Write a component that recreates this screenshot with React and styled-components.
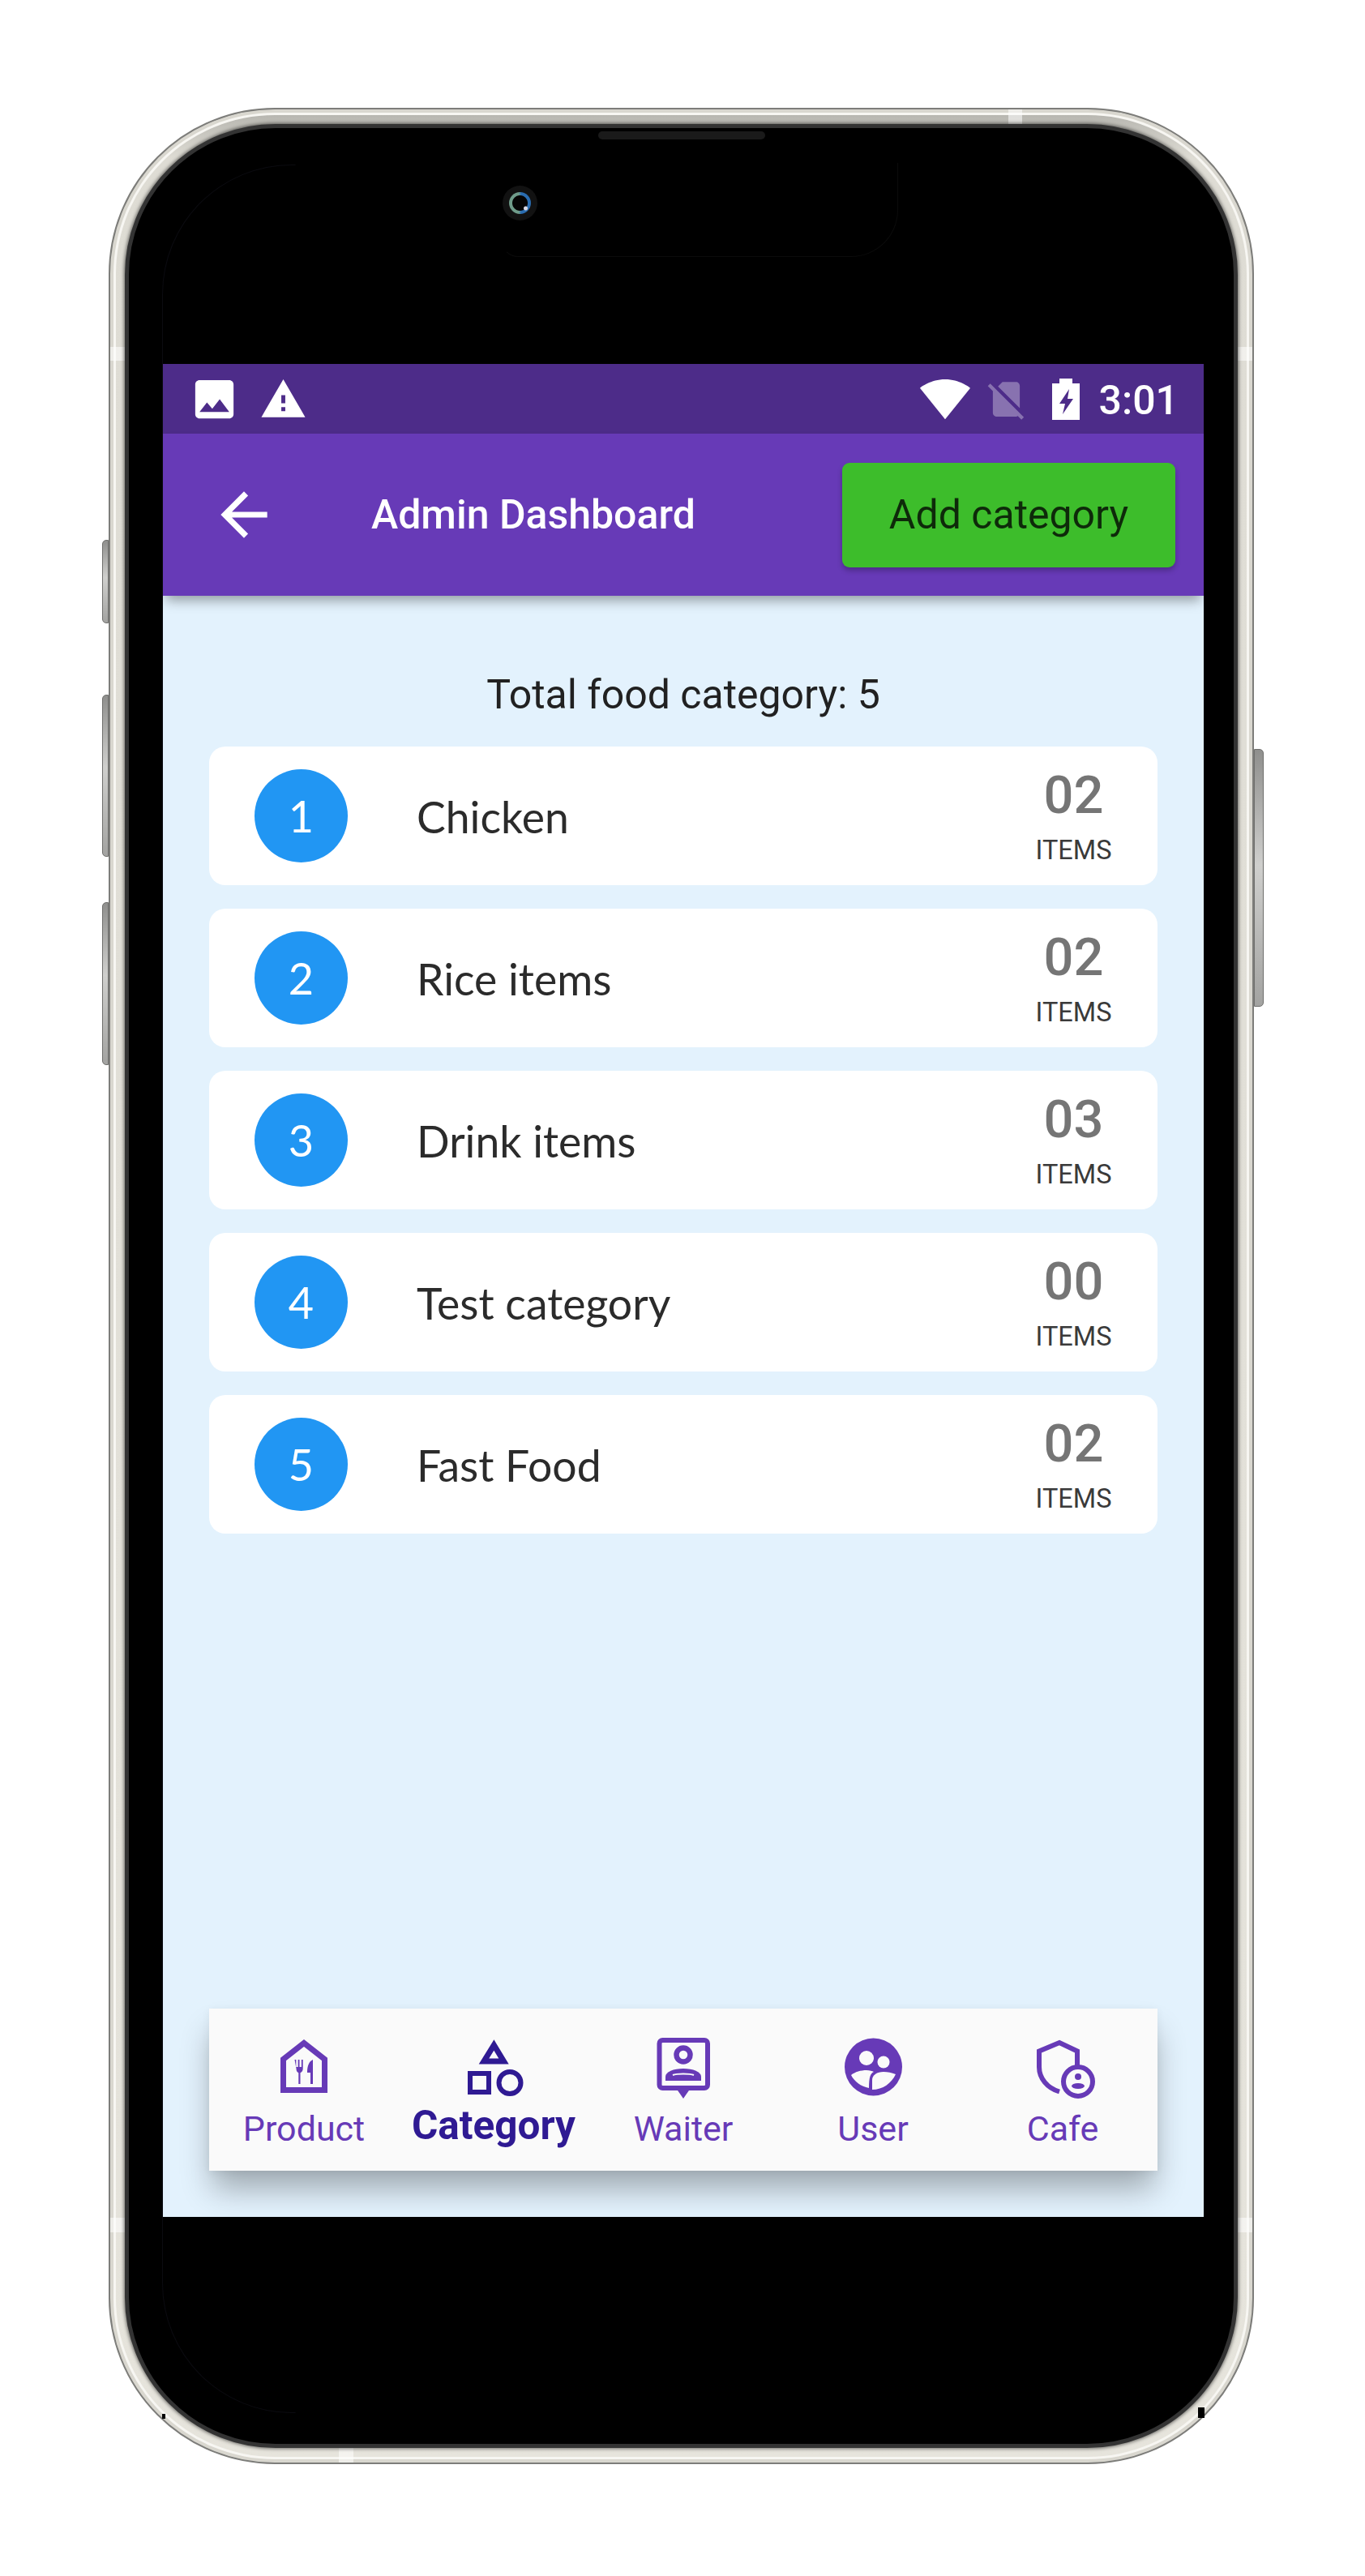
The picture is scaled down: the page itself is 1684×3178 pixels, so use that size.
import React from 'react'
import styled, { createGlobalStyle } from 'styled-components'

const categories = [
  { id: 1, name: 'Chicken', count: '02' },
  { id: 2, name: 'Rice items', count: '02' },
  { id: 3, name: 'Drink items', count: '03' },
  { id: 4, name: 'Test category', count: '00' },
  { id: 5, name: 'Fast Food', count: '02' },
]

const purple = '#673ab7'
const indigo = '#2f1a93'

const ProductIcon = () => (
  <NavSvg viewBox="0 0 80 76">
    <path d="M14.5 64.5V26.5L40 6.5 65.5 26.5V64.5Z" fill="none" stroke={purple} strokeWidth="7" />
    <path d="M28 27h1.8v9h2.4v-9H34v9h2.4v-9h1.8v11c0 3-1.6 4.6-3.2 5.2V57h-2.2V43.2c-1.7-.6-2.8-2.2-2.8-5.2z" fill={purple} transform="translate(0.5 0)" />
    <path d="M51 57V27c-4.5 2-7 7-7 16h4v14z" fill={purple} />
  </NavSvg>
)

const CategoryIcon = () => (
  <NavSvg viewBox="0 0 80 76">
    <path d="M40.4 9 L52.5 29 H28 Z" fill="none" stroke={indigo} strokeWidth="7" />
    <rect x="11" y="44" width="23" height="23" fill="none" stroke={indigo} strokeWidth="6" />
    <circle cx="60" cy="55.5" r="13.5" fill="none" stroke={indigo} strokeWidth="6" />
  </NavSvg>
)

const WaiterIcon = () => (
  <NavSvg viewBox="0 0 80 76">
    <rect x="10.5" y="3" width="59.5" height="59" rx="4" fill="none" stroke={purple} strokeWidth="6" />
    <path d="M31 62L40 75 49 62z" fill={purple} />
    <circle cx="40" cy="21" r="8.5" fill="none" stroke={purple} strokeWidth="6.5" />
    <path d="M18 53V48C18 42 28 38 40 38S62 42 62 48V53Z" fill={purple} />
    <path d="M27 46C32 44 48 44 53 46" fill="none" stroke="#fafafa" strokeWidth="2" />
  </NavSvg>
)

const UserIcon = () => (
  <NavSvg viewBox="0 0 80 76">
    <circle cx="40.5" cy="36" r="35.5" fill={purple} />
    <circle cx="32" cy="25" r="9" fill="#fafafa" />
    <circle cx="53" cy="30" r="7.5" fill="#fafafa" />
    <path d="M13 46C18 42 25 40 32 40 36 40 39 41 41 42 37 44 35 48 35 62 25 60 17 54 13 46Z" fill="#fafafa" />
    <path d="M39 64V52C39 46 45 42 53 42 58 42 63 43 68 45 63 56 52 64 39 64Z" fill="#fafafa" />
  </NavSvg>
)

const CafeIcon = () => (
  <NavSvg viewBox="0 0 80 76">
    <path d="M58 34V16.5L36 6 11 16.5V36C11 50 21 62 36 66.5" fill="none" stroke={purple} strokeWidth="6" />
    <circle cx="59" cy="54" r="18" fill="none" stroke={purple} strokeWidth="6" />
    <circle cx="59" cy="48" r="4" fill={purple} />
    <ellipse cx="59" cy="59.5" rx="8" ry="3.5" fill={purple} />
  </NavSvg>
)

const navItems = [
  { label: 'Product', Icon: ProductIcon },
  { label: 'Category', Icon: CategoryIcon, active: true },
  { label: 'Waiter', Icon: WaiterIcon },
  { label: 'User', Icon: UserIcon },
  { label: 'Cafe', Icon: CafeIcon },
]

export default function App() {
  return (
    <>
      <GlobalStyle />
      <Page>
        <Phone>
          <SideKey $side="left" $top={531} $height={103} />
          <SideKey $side="left" $top={722} $height={200} />
          <SideKey $side="left" $top={978} $height={201} />
          <SideKey $side="right" $top={789} $height={318} />
          <Band $left={0} $top={293} $w={20} $h={17} />
          <Band $right={0} $top={293} $w={20} $h={17} />
          <Band $left={0} $top={2601} $w={20} $h={18} />
          <Band $right={0} $top={2601} $w={20} $h={18} />
          <Band $left={1108} $top={0} $w={17} $h={24} />
          <Band $left={282} $bottom={0} $w={18} $h={18} />
          <CornerNub $left={64} $top={2843} $w={4} $h={6} />
          <CornerNub $left={1342} $top={2835} $w={8} $h={13} />
          <Bezel>
            <Speaker />
            <Camera><Lens /></Camera>
            <NotchLine />
            <ScreenLine />
            <Screen>
              <StatusBar>
                <StatusGroup>
                  <StatusSvg $size={63} viewBox="0 0 24 24"><path d="M21 19V5c0-1.1-.9-2-2-2H5c-1.1 0-2 .9-2 2v14c0 1.1.9 2 2 2h14c1.1 0 2-.9 2-2zM8.5 13.5l2.5 3.01L14.5 12l4.5 6H5l3.5-4.5z" /></StatusSvg>
                  <StatusSvg $size={59} $gap={24} viewBox="0 0 24 24"><path d="M1 21h22L12 2 1 21zm12-3h-2v-2h2v2zm0-4h-2v-4h2v4z" /></StatusSvg>
                </StatusGroup>
                <StatusGroup>
                  <StatusSvg $size={64} viewBox="0 0 24 24"><path d="M12.01 21.49L23.64 7c-.45-.34-4.93-4-11.64-4C5.28 3 .81 6.66.36 7l11.63 14.49.01.01.01-.01z" /></StatusSvg>
                  <StatusSvg $size={57} $gap={15} $dim viewBox="0 0 24 24"><path d="M18.99 5c0-1.1-.89-2-1.99-2h-7L7.66 5.34 19 16.68 18.99 5zM3.65 3.88L2.38 5.15 5 7.77V19c0 1.1.9 2 2 2h10.01c.35 0 .67-.1.96-.26l1.88 1.88 1.27-1.27L3.65 3.88z" /></StatusSvg>
                  <BatterySvg viewBox="0 0 34 51"><path fillRule="evenodd" d="M9 0h16v6h9v45H0V6h9zM21 13L9 31h7l-3 13 13-19h-7l2-12z" /></BatterySvg>
                  <Clock>3:01</Clock>
                </StatusGroup>
              </StatusBar>
              <Header>
                <BackIcon viewBox="0 0 24 24"><path d="M20 11H7.83l5.59-5.59L12 4l-8 8 8 8 1.41-1.41L7.83 13H20v-2z" /></BackIcon>
                <Title>Admin Dashboard</Title>
                <AddButton>Add category</AddButton>
              </Header>
              <Body>
                <TotalLine>Total food category: 5</TotalLine>
                <CategoryList>
                  {categories.map((c) => (
                    <CategoryCard key={c.id}>
                      <Badge>{c.id}</Badge>
                      <CategoryName>{c.name}</CategoryName>
                      <CountBox>
                        <Count>{c.count}</Count>
                        <CountLabel>ITEMS</CountLabel>
                      </CountBox>
                    </CategoryCard>
                  ))}
                </CategoryList>
                <BottomNav>
                  {navItems.map(({ label, Icon, active }) => (
                    <NavItem key={label}>
                      <Icon />
                      <NavLabel $active={active}>{label}</NavLabel>
                    </NavItem>
                  ))}
                </BottomNav>
              </Body>
            </Screen>
          </Bezel>
        </Phone>
      </Page>
    </>
  )
}

const GlobalStyle = createGlobalStyle`
  * { box-sizing: border-box; }
  html, body { margin: 0; background: #fff; }
  body { font-family: Roboto, sans-serif; }
`

const Page = styled.div`
  width: 1684px;
  height: 3178px;
  padding: 133px 0 0 134px;
  overflow: hidden;
`

const Phone = styled.div`
  position: relative;
  width: 1413px;
  height: 2907px;
  padding: 18px;
  border: 2px solid #7d7d7a;
  border-radius: 205px;
  background: linear-gradient(#b3b2ac 0, #dedcd4 60px, #e6e4dc 100%);
  box-shadow: inset 0 0 0 4px #d9d7cf, inset 0 0 0 7px #f7f6f2;
`

const SideKey = styled.div`
  position: absolute;
  top: ${(p) => p.$top}px;
  ${(p) => (p.$side === 'left' ? 'left: -10px; border-radius: 5px 0 0 5px; border-right: none;' : 'right: -14px; border-radius: 0 5px 5px 0; border-left: none;')}
  width: ${(p) => (p.$side === 'left' ? 8 : 12)}px;
  height: ${(p) => p.$height}px;
  border: 1px solid #6f6f6d;
  background: linear-gradient(#8f8f8d, #cfcfcd 45%, #a3a3a1);
`

const Band = styled.div`
  position: absolute;
  ${(p) => p.$left !== undefined && `left: ${p.$left}px;`}
  ${(p) => p.$right !== undefined && `right: ${p.$right}px;`}
  ${(p) => p.$top !== undefined && `top: ${p.$top}px;`}
  ${(p) => p.$bottom !== undefined && `bottom: ${p.$bottom}px;`}
  width: ${(p) => p.$w}px;
  height: ${(p) => p.$h}px;
  background: rgba(255, 255, 255, 0.55);
`

const CornerNub = styled.div`
  position: absolute;
  left: ${(p) => p.$left}px;
  top: ${(p) => p.$top}px;
  width: ${(p) => p.$w}px;
  height: ${(p) => p.$h}px;
  background: #000;
`

const Bezel = styled.div`
  position: relative;
  height: 100%;
  padding: 291px 37px 280px 42px;
  border: 5px solid #333;
  border-radius: 186px;
  background: #000;
  box-shadow: 0 0 4px 1px rgba(0, 0, 0, 0.55);
`

const Speaker = styled.div`
  position: absolute;
  top: 4px;
  left: 579px;
  width: 206px;
  height: 10px;
  border-radius: 5px;
  background: #1a1a1a;
`

const Camera = styled.div`
  position: absolute;
  top: 71px;
  left: 461px;
  width: 43px;
  height: 43px;
  display: flex;
  align-items: center;
  justify-content: center;
  border-radius: 50%;
  background: #121212;
`

const Lens = styled.div`
  width: 27px;
  height: 27px;
  border-radius: 50%;
  background:
    radial-gradient(circle at 76% 74%, #d9d9e6 0 2px, transparent 3px),
    radial-gradient(circle at 50% 50%, #050505 0 9px, transparent 10px),
    linear-gradient(90deg, #6f9c8a 0 45%, #2a6cb0 55%);
`

const NotchLine = styled.div`
  position: absolute;
  top: 43px;
  left: 460px;
  width: 489px;
  height: 116px;
  border: 1px solid #0b0b0b;
  border-top: none;
  border-left-color: transparent;
  border-radius: 0 0 58px 20px;
`

const ScreenLine = styled.div`
  position: absolute;
  top: 45px;
  left: 41px;
  width: 165px;
  height: 2774px;
  border: 1px solid #0b0b10;
  border-right-color: transparent;
  border-radius: 160px 0 0 160px;
`

const Screen = styled.div`
  position: relative;
  height: 100%;
  display: flex;
  flex-direction: column;
  overflow: hidden;
  background: #e3f2fd;
`

const StatusBar = styled.div`
  height: 86px;
  flex: none;
  display: flex;
  align-items: center;
  justify-content: space-between;
  padding: 0 31px 0 32px;
  background: #4d2c89;
`

const StatusGroup = styled.div`
  display: flex;
  align-items: center;
`

const StatusSvg = styled.svg`
  width: ${(p) => p.$size}px;
  height: ${(p) => p.$size}px;
  margin-left: ${(p) => p.$gap || 0}px;
  fill: #fff;
  opacity: ${(p) => (p.$dim ? 0.33 : 1)};
`

const BatterySvg = styled.svg`
  width: 34px;
  height: 51px;
  margin-left: 28px;
  fill: #fff;
`

const Clock = styled.span`
  margin-left: 24px;
  padding-top: 3px;
  font-size: 50px;
  font-weight: 500;
  line-height: 60px;
  color: #fff;
`

const Header = styled.div`
  position: relative;
  z-index: 1;
  height: 200px;
  flex: none;
  display: flex;
  align-items: center;
  padding: 0 35px 0 57px;
  background: ${purple};
  box-shadow: 0 10px 14px -4px rgba(0, 0, 0, 0.35);
`

const BackIcon = styled.svg`
  width: 86px;
  height: 86px;
  flex: none;
  fill: #fff;
`

const Title = styled.h1`
  margin: 0 0 0 114px;
  font-size: 50px;
  font-weight: 500;
  color: #fff;
`

const AddButton = styled.button`
  width: 411px;
  height: 129px;
  margin-left: auto;
  padding: 0;
  border: none;
  border-radius: 9px;
  background: #3dbd2b;
  box-shadow: 0 4px 6px rgba(0, 0, 0, 0.25);
  font-family: Roboto, sans-serif;
  font-size: 50px;
  color: #0e2a0a;
`

const Body = styled.div`
  flex: 1;
  display: flex;
  flex-direction: column;
  padding: 0 57px 57px;
`

const TotalLine = styled.p`
  margin: 94px 0 0;
  height: 92px;
  font-size: 50px;
  line-height: 56px;
  text-align: center;
  color: #212121;
`

const CategoryList = styled.div`
  display: flex;
  flex-direction: column;
  gap: 29px;
`

const CategoryCard = styled.div`
  height: 171px;
  display: flex;
  align-items: center;
  padding-left: 56px;
  border-radius: 20px;
  background: #fff;
`

const Badge = styled.div`
  width: 115px;
  height: 115px;
  flex: none;
  display: flex;
  align-items: center;
  justify-content: center;
  border-radius: 50%;
  background: #2196f3;
  font-family: Lato, sans-serif;
  font-size: 54px;
  color: #fff;
`

const CategoryName = styled.div`
  margin-left: 85px;
  font-family: Lato, sans-serif;
  font-size: 53.5px;
  color: #2b2b2b;
`

const CountBox = styled.div`
  width: 207px;
  margin-left: auto;
  padding-bottom: 3px;
  display: flex;
  flex-direction: column;
  align-items: center;
`

const Count = styled.div`
  font-size: 65px;
  font-weight: 500;
  line-height: 80px;
  color: #757575;
`

const CountLabel = styled.div`
  margin-top: 8px;
  font-size: 32.5px;
  line-height: 40px;
  color: #3a3a3a;
`

const BottomNav = styled.div`
  height: 200px;
  margin-top: auto;
  display: grid;
  grid-template-columns: repeat(5, 1fr);
  background: #fafafa;
  box-shadow: 0 26px 36px -4px rgba(0, 0, 0, 0.3), 0 2px 10px rgba(0, 0, 0, 0.06);
`

const NavItem = styled.div`
  display: flex;
  flex-direction: column;
  align-items: center;
  padding-top: 36px;
`

const NavSvg = styled.svg`
  width: 80px;
  height: 76px;
  flex: none;
`

const NavLabel = styled.span`
  margin-top: ${(p) => (p.$active ? 4 : 8)}px;
  font-size: ${(p) => (p.$active ? 49.5 : 43)}px;
  font-weight: ${(p) => (p.$active ? 700 : 400)};
  line-height: 56px;
  color: ${(p) => (p.$active ? indigo : purple)};
`
